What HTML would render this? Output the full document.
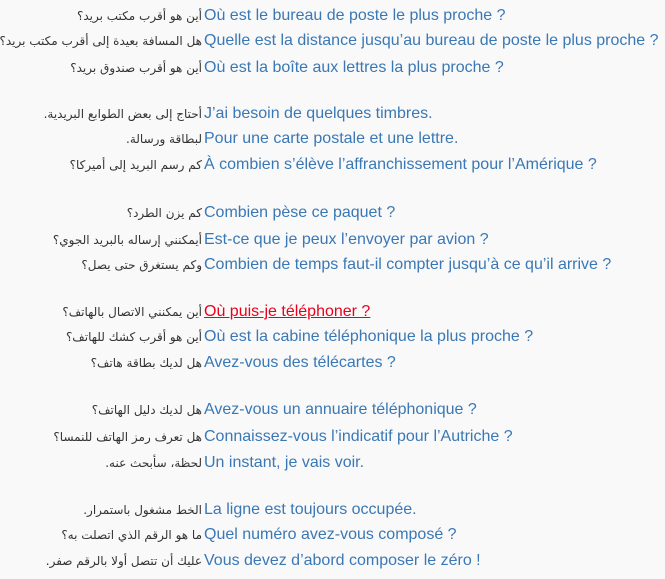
<!DOCTYPE html>
<html><head><meta charset="utf-8"><style>
body{margin:0;background:#f9f9f9;width:665px;height:579px;overflow:hidden;position:relative}
.r{position:absolute;left:0;width:665px;height:24px;line-height:24px;white-space:nowrap}
.a{position:absolute;right:463px;font-family:"DejaVu Sans",sans-serif;font-size:12px;color:#333;direction:rtl}
.f{position:absolute;left:204px;font-family:"Liberation Sans",sans-serif;font-size:16px;color:#3a78b5}
.f.red{color:#e8001c;text-decoration:underline}
</style></head><body>
<div class="r" style="top:4px"><span class="a">أين هو أقرب مكتب بريد؟</span><span class="f">Où est le bureau de poste le plus proche ?</span></div>
<div class="r" style="top:29px"><span class="a">هل المسافة بعيدة إلى أقرب مكتب بريد؟</span><span class="f">Quelle est la distance jusqu’au bureau de poste le plus proche ?</span></div>
<div class="r" style="top:56px"><span class="a">أين هو أقرب صندوق بريد؟</span><span class="f">Où est la boîte aux lettres la plus proche ?</span></div>
<div class="r" style="top:102px"><span class="a">أحتاج إلى بعض الطوابع البريدية.</span><span class="f">J’ai besoin de quelques timbres.</span></div>
<div class="r" style="top:127px"><span class="a">لبطاقة ورسالة.</span><span class="f">Pour une carte postale et une lettre.</span></div>
<div class="r" style="top:153px"><span class="a">كم رسم البريد إلى أميركا؟</span><span class="f">À combien s’élève l’affranchissement pour l’Amérique ?</span></div>
<div class="r" style="top:201px"><span class="a">كم يزن الطرد؟</span><span class="f">Combien pèse ce paquet ?</span></div>
<div class="r" style="top:228px"><span class="a">أيمكنني إرساله بالبريد الجوي؟</span><span class="f">Est-ce que je peux l’envoyer par avion ?</span></div>
<div class="r" style="top:253px"><span class="a">وكم يستغرق حتى يصل؟</span><span class="f">Combien de temps faut-il compter jusqu’à ce qu’il arrive ?</span></div>
<div class="r" style="top:300px"><span class="a">أين يمكنني الاتصال بالهاتف؟</span><span class="f red">Où puis-je téléphoner ?</span></div>
<div class="r" style="top:325px"><span class="a">أين هو أقرب كشك للهاتف؟</span><span class="f">Où est la cabine téléphonique la plus proche ?</span></div>
<div class="r" style="top:351px"><span class="a">هل لديك بطاقة هاتف؟</span><span class="f">Avez-vous des télécartes ?</span></div>
<div class="r" style="top:398px"><span class="a">هل لديك دليل الهاتف؟</span><span class="f">Avez-vous un annuaire téléphonique ?</span></div>
<div class="r" style="top:425px"><span class="a">هل تعرف رمز الهاتف للنمسا؟</span><span class="f">Connaissez-vous l’indicatif pour l’Autriche ?</span></div>
<div class="r" style="top:451px"><span class="a">لحظة، سأبحث عنه.</span><span class="f">Un instant, je vais voir.</span></div>
<div class="r" style="top:498px"><span class="a">الخط مشغول باستمرار.</span><span class="f">La ligne est toujours occupée.</span></div>
<div class="r" style="top:523px"><span class="a">ما هو الرقم الذي اتصلت به؟</span><span class="f">Quel numéro avez-vous composé ?</span></div>
<div class="r" style="top:549px"><span class="a">عليك أن تتصل أولا بالرقم صفر.</span><span class="f">Vous devez d’abord composer le zéro !</span></div>
</body></html>
